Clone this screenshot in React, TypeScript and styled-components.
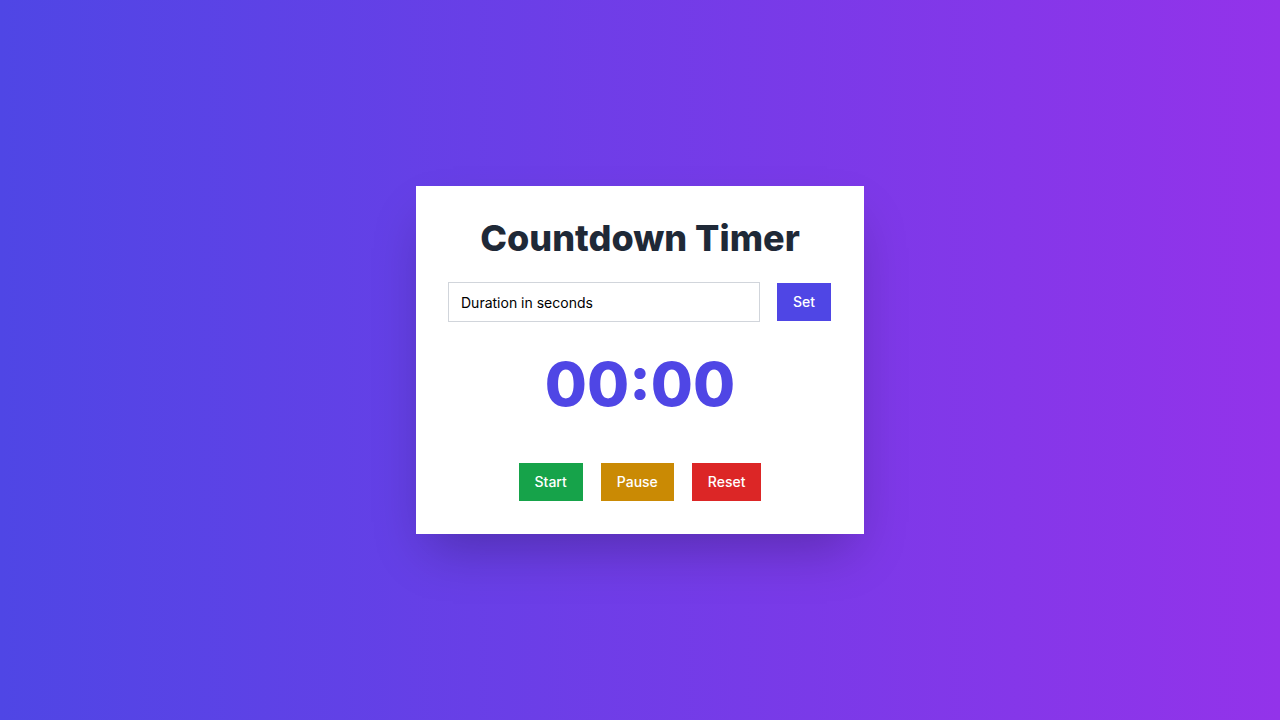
import React, { useEffect, useRef, useState } from 'react';
import styled, { createGlobalStyle } from 'styled-components';

const GlobalStyle = createGlobalStyle`
  * {
    box-sizing: border-box;
  }
  html,
  body {
    margin: 0;
    padding: 0;
  }
  body {
    font-family: Inter, 'Noto Sans', 'Liberation Sans', sans-serif;
  }
`;

const Page = styled.div`
  min-height: 100vh;
  display: flex;
  align-items: center;
  justify-content: center;
  background: linear-gradient(90deg, #4f46e5 0%, #9333ea 100%);
`;

const Card = styled.div`
  width: 448px;
  background: #ffffff;
  padding: 32px 32px 33px;
  box-shadow: 0px 25px 50px -12px rgba(0, 0, 0, 0.25);
  display: flex;
  flex-direction: column;
  align-items: center;
`;

const Title = styled.h1`
  margin: 0 0 24px;
  font-size: 36px;
  line-height: 40px;
  font-weight: 800;
  color: #1f2937;
`;

const InputRow = styled.div`
  width: 100%;
  display: flex;
  align-items: center;
  gap: 17px;
  height: 40px;
`;

const DurationInput = styled.input`
  width: 312px;
  height: 40px;
  border: 1px solid #d1d5db;
  padding: 0 12px;
  font-family: inherit;
  font-size: 14px;
  color: #000000;
  outline: none;

  &::placeholder {
    color: #000000;
    opacity: 1;
  }
`;

const Button = styled.button<{ $color: string }>`
  border: none;
  background-color: ${(props) => props.$color};
  color: #ffffff;
  font-family: inherit;
  font-size: 14px;
  font-weight: 500;
  line-height: 22px;
  padding: 8px 16px;
  cursor: pointer;
`;

const Display = styled.div`
  margin: 32px 0 49px;
  font-size: 61px;
  line-height: 60px;
  font-weight: 800;
  color: #4f46e5;
`;

const Controls = styled.div`
  display: flex;
  gap: 18px;
`;

function format(total: number) {
  const m = Math.floor(total / 60);
  const s = total % 60;
  return `${String(m).padStart(2, '0')}:${String(s).padStart(2, '0')}`;
}

export default function App() {
  const [input, setInput] = useState('');
  const [duration, setDuration] = useState(0);
  const [left, setLeft] = useState(0);
  const [running, setRunning] = useState(false);
  const timer = useRef<number | null>(null);

  useEffect(() => {
    if (!running) return undefined;
    timer.current = window.setInterval(() => {
      setLeft((prev) => {
        if (prev <= 1) {
          setRunning(false);
          return 0;
        }
        return prev - 1;
      });
    }, 1000);
    return () => {
      if (timer.current) window.clearInterval(timer.current);
    };
  }, [running]);

  function handleSet() {
    const n = parseInt(input, 10);
    if (!Number.isNaN(n) && n >= 0) {
      setDuration(n);
      setLeft(n);
      setRunning(false);
    }
  }

  return (
    <>
      <GlobalStyle />
      <Page>
        <Card>
          <Title>Countdown Timer</Title>
          <InputRow>
            <DurationInput
              type="number"
              placeholder="Duration in seconds"
              value={input}
              onChange={(e) => setInput(e.target.value)}
            />
            <Button $color="#4f46e5" type="button" onClick={handleSet}>
              Set
            </Button>
          </InputRow>
          <Display>{format(left)}</Display>
          <Controls>
            <Button
              $color="#16a34a"
              type="button"
              onClick={() => left > 0 && setRunning(true)}
            >
              Start
            </Button>
            <Button $color="#ca8a04" type="button" onClick={() => setRunning(false)}>
              Pause
            </Button>
            <Button
              $color="#dc2626"
              type="button"
              onClick={() => {
                setRunning(false);
                setLeft(duration);
              }}
            >
              Reset
            </Button>
          </Controls>
        </Card>
      </Page>
    </>
  );
}
